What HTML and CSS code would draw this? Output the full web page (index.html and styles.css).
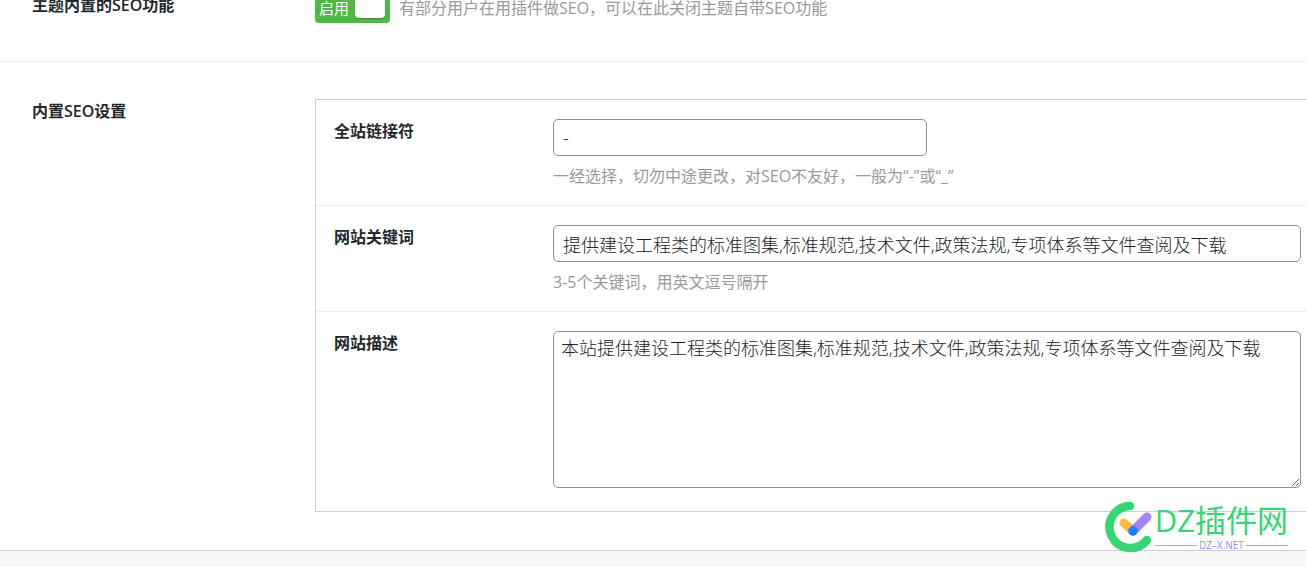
FILE: index.html
```html
<!DOCTYPE html>
<html lang="zh-CN">
<head>
<meta charset="utf-8">
<title>SEO设置</title>
<link rel="stylesheet" href="styles.css">
</head>
<body>
<form class="settings">
  <section class="setting">
    <label class="title" for="seo-switch">主题内置的SEO功能</label>
    <div class="control switch-line">
      <label class="switch">
        <input class="switch-input" id="seo-switch" type="checkbox" checked>
        <span class="switch-text">启用</span>
        <span class="switch-knob"></span>
      </label>
      <span class="hint">有部分用户在用插件做SEO，可以在此关闭主题自带SEO功能</span>
    </div>
  </section>
  <section class="setting">
    <h2 class="title">内置SEO设置</h2>
    <div class="control group">
      <div class="field">
        <label class="field-title" for="connector">全站链接符</label>
        <div class="field-body">
          <input class="input input-short" id="connector" type="text" value="-">
          <p class="hint">一经选择，切勿中途更改，对SEO不友好，一般为“-”或“_”</p>
        </div>
      </div>
      <div class="field">
        <label class="field-title" for="keywords">网站关键词</label>
        <div class="field-body">
          <input class="input" id="keywords" type="text" value="提供建设工程类的标准图集,标准规范,技术文件,政策法规,专项体系等文件查阅及下载">
          <p class="hint">3-5个关键词，用英文逗号隔开</p>
        </div>
      </div>
      <div class="field">
        <label class="field-title" for="description">网站描述</label>
        <div class="field-body">
          <textarea class="input textarea" id="description">本站提供建设工程类的标准图集,标准规范,技术文件,政策法规,专项体系等文件查阅及下载</textarea>
        </div>
      </div>
    </div>
  </section>
</form>
<div class="watermark">
  <svg class="mark" viewBox="0 0 52 54" width="52" height="54" fill="none" stroke-linecap="round" aria-hidden="true">
    <path d="M27 6A21 21 0 1 0 44 40" stroke="#35d673" stroke-width="8.5"/>
    <path d="M21 23L30 31" stroke="#ffb93c" stroke-width="9"/>
    <path d="M44 17L30 31" stroke="#a682ff" stroke-width="9"/>
    <circle cx="30" cy="31" r="4.7" fill="#1684fc"/>
  </svg>
  <div class="brand">
    <span class="brand-name">DZ插件网</span>
    <span class="brand-site">DZ–X.NET</span>
  </div>
</div>
</body>
</html>
```
FILE: styles.css
```css
* {
  box-sizing: border-box;
}

body {
  margin: 0;
  overflow: hidden;
  background: #f9f9f9;
  color: #23282d;
  font: 16px/24px "Open Sans", "Noto Sans CJK SC", sans-serif;
}

.settings {
  margin-top: -45px;
  background: #fff;
  border-bottom: 1px solid #ccd0d4;
}

.setting {
  display: grid;
  grid-template-columns: 283px 1fr;
  padding: 37px 0 38px 32px;
}

.setting:first-child {
  padding-top: 38px;
  border-bottom: 1px solid #eee;
}

.title,
.field-title {
  margin: 0;
  font-size: 16px;
  font-weight: 600;
  line-height: 24px;
}

.switch-line {
  display: flex;
  align-items: center;
  gap: 9px;
}

.switch {
  position: relative;
  display: flex;
  align-items: center;
  justify-content: space-between;
  width: 75px;
  height: 30px;
  padding: 0 5px 0 4px;
  border-radius: 4px;
  background: #4fb845;
  color: #fff;
  font-size: 15px;
}

.switch-input {
  position: absolute;
  inset: 0;
  margin: 0;
  opacity: 0;
}

.switch-knob {
  width: 30px;
  height: 20px;
  border-radius: 4px;
  background: #fff;
  box-shadow: 0 1px 1px rgba(0, 0, 0, 0.25);
}

.hint {
  margin: 0;
  color: #999;
}

.group {
  border: 1px solid #ccd0d4;
  border-right: 0;
}

.field {
  display: grid;
  grid-template-columns: 219px 1fr;
  padding: 19px 5px 17px 18px;
  border-bottom: 1px solid #eee;
}

.field:last-child {
  padding-bottom: 23px;
  border-bottom: 0;
}

.field-body {
  display: grid;
  gap: 8px;
}

.input {
  width: 100%;
  height: 37px;
  padding: 0 9px;
  border: 1px solid #8c8f94;
  border-radius: 5px;
  background: #fff;
  color: #1d2327;
  font: 300 18px/28px "Open Sans", "Noto Sans CJK SC", sans-serif;
}

.input-short {
  width: 50%;
}

.textarea {
  display: block;
  height: 157px;
  padding: 2px 7px;
  resize: vertical;
}

.watermark {
  position: absolute;
  right: 18px;
  bottom: 13px;
  display: flex;
}

.brand {
  display: flex;
  flex-direction: column;
}

.brand-name {
  color: #35d673;
  font-size: 31px;
  line-height: 40px;
}

.brand-site {
  display: flex;
  align-items: center;
  gap: 2px;
  color: #a682ff;
  font-size: 10px;
  line-height: 10px;
}

.brand-site::before,
.brand-site::after {
  flex: 1;
  height: 1px;
  background: #b79bff;
  content: "";
}
```
